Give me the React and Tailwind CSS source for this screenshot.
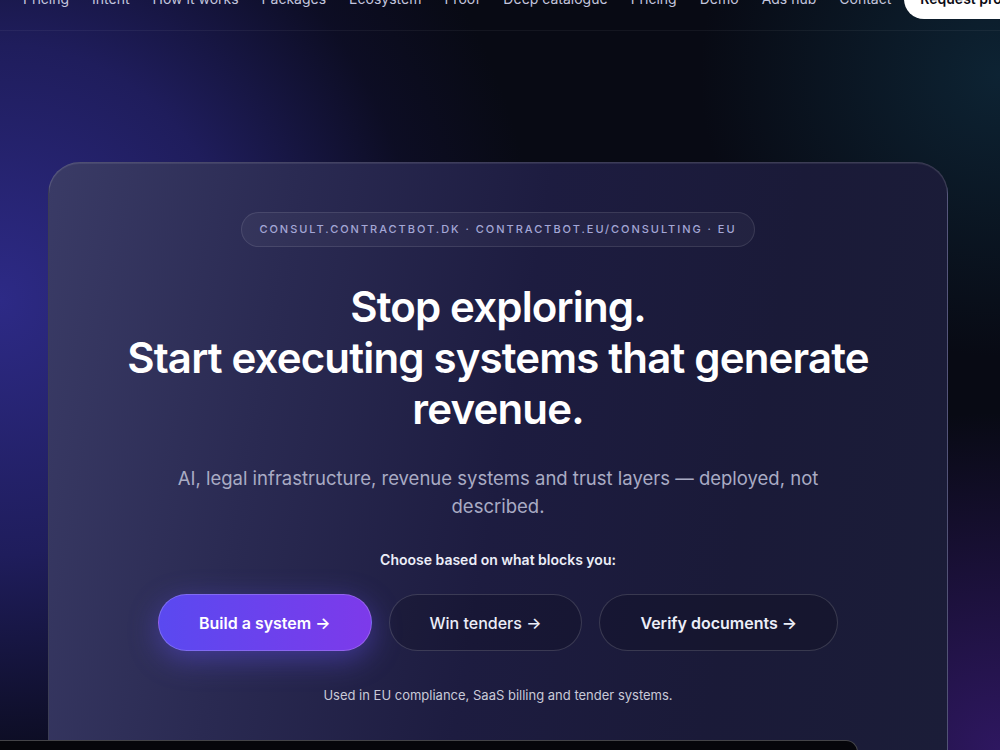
import React from 'react';

const navLinks = [
  'Pricing',
  'Intent',
  'How it works',
  'Packages',
  'Ecosystem',
  'Proof',
  'Deep catalogue',
  'Pricing',
  'Demo',
  'Ads hub',
  'Contact',
];

function App() {
  return (
    <div
      className="relative h-[750px] w-full overflow-hidden bg-[#080a14] text-white"
      style={{ fontFamily: 'Inter, "Noto Sans", sans-serif' }}
    >
      {/* background glows */}
      <div className="pointer-events-none absolute inset-0 bg-[radial-gradient(ellipse_60%_85%_at_0%_40%,#2d2a86_0%,#1f1d5c_40%,rgba(20,18,60,0.4)_70%,transparent_90%)]" />
      <div className="pointer-events-none absolute inset-0 bg-[radial-gradient(ellipse_40%_50%_at_100%_10%,#0d2333_0%,transparent_75%)]" />
      <div className="pointer-events-none absolute inset-0 bg-[radial-gradient(ellipse_50%_60%_at_100%_100%,#2e1760_0%,transparent_75%)]" />

      <div className="relative flex flex-col">
        {/* Top navigation (page is scrolled a little) */}
        <nav className="-mt-[33px] flex h-16 items-center gap-[23px] border-b border-white/5 pl-[23px] text-sm text-[#c3c5dd]">
          {navLinks.map((link, i) => (
            <a key={i} className="whitespace-nowrap">
              {link}
            </a>
          ))}
          <button className="ml-[-10px] h-10 whitespace-nowrap rounded-full bg-white px-4 text-sm font-semibold text-[#0b0b14]">
            Request proposal
          </button>
        </nav>

        {/* Hero card */}
        <section className="px-12 pt-[131px]">
          <div className="flex w-[900px] flex-col items-center rounded-[32px] border border-white/15 bg-[linear-gradient(100deg,#3a3b66_0%,#2a2a52_25%,#1d1c40_50%,#1a1a38_75%,#1b1d38_100%)] px-10 pb-24 pt-[49px] shadow-[inset_0_1px_0_rgba(255,255,255,0.08)]">
            <div className="flex h-[35px] items-center rounded-full border border-white/10 bg-white/[0.04] px-[17px] text-[11px] font-medium tracking-[0.18em] text-[#a4a7d6]">
              CONSULT.CONTRACTBOT.DK · CONTRACTBOT.EU/CONSULTING · EU
            </div>

            <h1 className="mt-[34px] text-center text-[42px] font-semibold leading-[51px] tracking-[-0.02em] text-white">
              Stop exploring.
              <br />
              Start executing systems that generate revenue.
            </h1>

            <p className="mt-[30px] max-w-[650px] text-center text-[18.5px] leading-[28px] text-[#a9abc4]">
              AI, legal infrastructure, revenue systems and trust layers — deployed, not described.
            </p>

            <p className="mt-[30px] text-sm font-semibold text-[#eceef8]">Choose based on what blocks you:</p>

            <div className="mt-[24px] flex gap-[17px]">
              <button className="h-[57px] rounded-full border border-white/20 bg-[linear-gradient(90deg,#5a49f0,#7d3aea)] px-10 text-base font-semibold text-white shadow-[0_8px_30px_rgba(99,82,240,0.45)]">
                Build a system →
              </button>
              <button className="h-[57px] rounded-full border border-white/15 bg-black/15 px-10 text-base font-medium text-[#eceef8]">
                Win tenders →
              </button>
              <button className="h-[57px] rounded-full border border-white/15 bg-black/15 px-10 text-base font-semibold text-[#eceef8]">
                Verify documents →
              </button>
            </div>

            <p className="mt-[35px] text-[13px] text-[#c9cad8]">
              Used in EU compliance, SaaS billing and tender systems.
            </p>
          </div>
        </section>
      </div>

      {/* next block peeking in at the bottom edge */}
      <div className="absolute left-[-20px] top-[740px] h-6 w-[878px] rounded-full border border-white/25 bg-[#06060b]" />
    </div>
  );
}

export default App;
